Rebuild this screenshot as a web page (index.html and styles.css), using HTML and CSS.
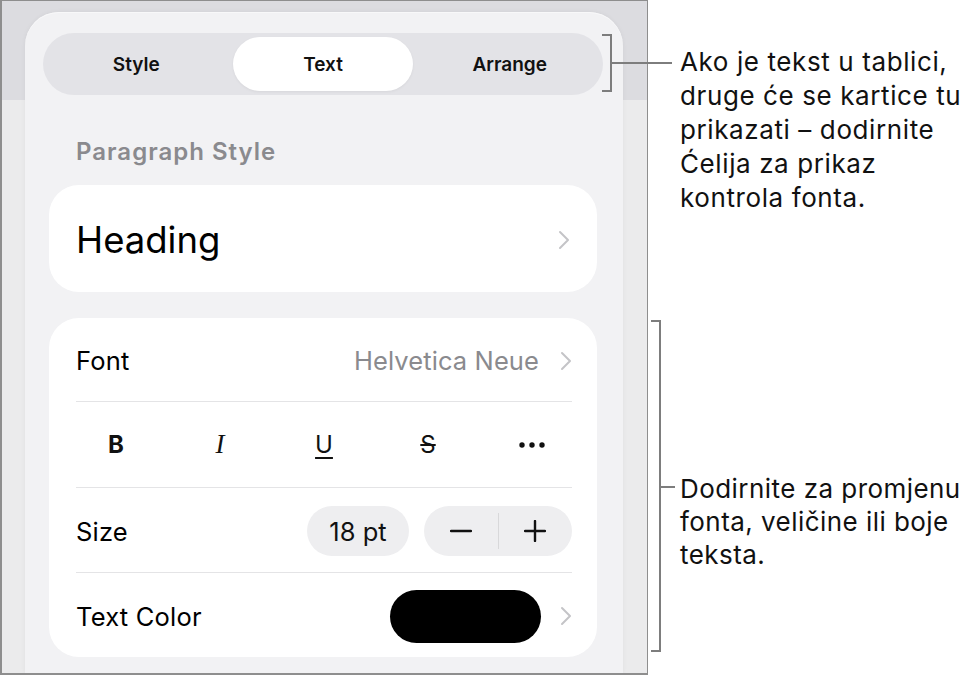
FILE: index.html
```html
<!DOCTYPE html>
<html lang="hr">
<head>
<meta charset="utf-8">
<title>Text format panel</title>
<link rel="stylesheet" href="styles.css">
</head>
<body>
<div class="stage">
  <div class="device">
    <div class="panel">
      <div class="segmented">
        <div class="seg">Style</div>
        <div class="seg seg-active">Text</div>
        <div class="seg">Arrange</div>
      </div>

      <div class="section-label">Paragraph Style</div>

      <div class="card card-heading">
        <span class="heading-value">Heading</span>
        <svg class="chev" viewBox="0 0 12 20" width="12" height="20"><path d="M2 2l8 8-8 8" fill="none" stroke="#c4c4c7" stroke-width="2" stroke-linecap="round" stroke-linejoin="round"/></svg>
      </div>

      <div class="card card-font">
        <div class="row row-first">
          <span class="row-label">Font</span>
          <span class="row-value">Helvetica Neue</span>
          <svg class="chev chev-gap" viewBox="0 0 12 20" width="12" height="20"><path d="M2 2l8 8-8 8" fill="none" stroke="#c4c4c7" stroke-width="2" stroke-linecap="round" stroke-linejoin="round"/></svg>
        </div>
        <div class="sep"></div>
        <div class="row row-format">
          <span class="fmt fmt-b">B</span>
          <span class="fmt fmt-i">I</span>
          <span class="fmt fmt-u">U</span>
          <span class="fmt fmt-s">S</span>
          <span class="fmt fmt-more"><svg viewBox="0 0 26 6" width="26" height="6"><circle cx="3" cy="3" r="2.7" fill="#111"/><circle cx="13" cy="3" r="2.7" fill="#111"/><circle cx="23" cy="3" r="2.7" fill="#111"/></svg></span>
        </div>
        <div class="sep"></div>
        <div class="row">
          <span class="row-label">Size</span>
          <span class="size-pill">18 pt</span>
          <div class="stepper">
            <span class="step"><svg viewBox="0 0 22 22" width="22" height="22"><path d="M1 11h20" stroke="#111" stroke-width="2.4" stroke-linecap="round"/></svg></span>
            <span class="step-div"></span>
            <span class="step"><svg viewBox="0 0 22 22" width="22" height="22"><path d="M1 11h20M11 1v20" stroke="#111" stroke-width="2.4" stroke-linecap="round"/></svg></span>
          </div>
        </div>
        <div class="sep"></div>
        <div class="row">
          <span class="row-label">Text Color</span>
          <span class="swatch"></span>
          <svg class="chev chev-swatch" viewBox="0 0 12 20" width="12" height="20"><path d="M2 2l8 8-8 8" fill="none" stroke="#c4c4c7" stroke-width="2" stroke-linecap="round" stroke-linejoin="round"/></svg>
        </div>
      </div>
    </div>
  </div>

  <div class="notes">
    <p class="note note-top">
      <span class="line">Ako je tekst u tablici,</span>
      <span class="line">druge će se kartice tu</span>
      <span class="line">prikazati – dodirnite</span>
      <span class="line">Ćelija za prikaz</span>
      <span class="line">kontrola fonta.</span>
    </p>
    <p class="note note-bottom">
      <span class="line">Dodirnite za promjenu</span>
      <span class="line">fonta, veličine ili boje</span>
      <span class="line">teksta.</span>
    </p>
  </div>

  <div class="bracket bracket-top"></div>
  <div class="leader leader-top"></div>
  <div class="bracket bracket-bottom"></div>
  <div class="leader leader-bottom"></div>
</div>
</body>
</html>
```

FILE: styles.css
```css
html, body {
  margin: 0;
  padding: 0;
  background: #ffffff;
}

body {
  font-family: Inter, "Noto Sans", "Liberation Sans", sans-serif;
  color: #111111;
}

.stage {
  position: relative;
  width: 971px;
  height: 676px;
  display: flex;
  overflow: hidden;
}

/* ---------- device screenshot ---------- */
.device {
  flex: none;
  width: 648px;
  height: 675px;
  box-sizing: border-box;
  border: 1px solid #8e8e8e;
  border-left-width: 2px;
  border-bottom-width: 2px;
  background: linear-gradient(to bottom, #dcdce0 0, #dcdce0 99px, #ebebec 99px, #ebebec 100%);
  display: flex;
  overflow: hidden;
}

.panel {
  flex: none;
  width: 598px;
  margin: 11px 24px 0 23px;
  box-sizing: border-box;
  padding: 21px 20px 0 18px;
  background: #f2f2f4;
  border-radius: 34px 34px 0 0;
  box-shadow: 0 0 5px rgba(0, 0, 0, 0.05), inset 0 1px 0 #f8f8f9;
}

/* segmented control */
.segmented {
  display: grid;
  grid-template-columns: repeat(3, 1fr);
  height: 62px;
  box-sizing: border-box;
  padding: 4px 0;
  background: #e3e3e7;
  border-radius: 31px;
}

.seg {
  display: flex;
  align-items: center;
  justify-content: center;
  font-size: 19px;
  font-weight: 600;
  color: #111111;
  border-radius: 27px;
}

.seg-active {
  background: #ffffff;
  margin: 0 3px;
  box-shadow: 0 1px 3px rgba(0, 0, 0, 0.05);
}

/* section label */
.section-label {
  margin: 43px 0 0 33px;
  font-size: 24px;
  line-height: 28px;
  font-weight: 600;
  letter-spacing: 1px;
  color: #8a8a8e;
}

/* cards */
.card {
  margin-left: 6px;
  width: 548px;
  background: #ffffff;
  border-radius: 30px;
  box-sizing: border-box;
}

.card-heading {
  margin-top: 19px;
  height: 107px;
  padding: 3px 27px 0 27px;
  display: flex;
  align-items: center;
  justify-content: space-between;
}

.heading-value {
  font-size: 36.5px;
  font-weight: 400;
  color: #000000;
}

.card-font {
  margin-top: 26px;
  padding: 0 25px 0 27px;
}

.chev {
  flex: none;
  display: block;
}

.row {
  display: flex;
  align-items: center;
  height: 84px;
  padding-top: 2px;
  box-sizing: border-box;
}

.row-first {
  height: 83px;
}

.row-label {
  font-size: 25.5px;
  letter-spacing: 0.2px;
  color: #000000;
}

.row-value {
  margin-left: auto;
  font-size: 25.5px;
  letter-spacing: 0.1px;
  color: #8a8a8e;
}

.chev-gap {
  margin-left: 21px;
}

.sep {
  height: 1px;
  background: #e4e4e6;
}

/* format buttons */
.row-format {
  height: 85px;
  display: grid;
  grid-template-columns: repeat(5, 104px);
  margin: 0 -12px;
  padding-top: 0;
}

.fmt {
  display: flex;
  align-items: center;
  justify-content: center;
  font-size: 24px;
  color: #111111;
}

.fmt-b {
  font-weight: 700;
}

.fmt-i {
  font-family: "Liberation Serif", "DejaVu Serif", serif;
  font-style: italic;
  font-size: 27px;
}

.fmt-u {
  text-decoration: underline;
  text-decoration-thickness: 2px;
  text-underline-offset: 4px;
}

.fmt-s {
  text-decoration: line-through;
  text-decoration-thickness: 2px;
}

.fmt-more svg {
  display: block;
}

/* size controls */
.size-pill {
  margin-left: auto;
  width: 102px;
  height: 50px;
  border-radius: 25px;
  background: #eeeef0;
  display: flex;
  align-items: center;
  justify-content: center;
  font-size: 25.5px;
  color: #111111;
}

.stepper {
  margin-left: 15px;
  width: 148px;
  height: 50px;
  border-radius: 25px;
  background: #eeeef0;
  display: grid;
  grid-template-columns: 1fr 1px 1fr;
  align-items: center;
}

.step {
  display: flex;
  align-items: center;
  justify-content: center;
}

.step svg {
  display: block;
}

.step-div {
  height: 36px;
  background: #d8d8da;
}

/* text colour */
.swatch {
  margin-left: auto;
  width: 151px;
  height: 53px;
  border-radius: 27px;
  background: #000000;
}

.chev-swatch {
  margin-left: 19px;
}

/* ---------- annotations ---------- */
.notes {
  flex: 1;
  padding: 45px 0 0 32px;
}

.note {
  margin: 0;
  font-size: 26px;
  color: #111111;
}

.note .line {
  display: block;
  white-space: nowrap;
}

.note-top {
  line-height: 34px;
  letter-spacing: 0.6px;
}

.note-bottom {
  margin-top: 257px;
  line-height: 33px;
  letter-spacing: 0.45px;
}

.bracket {
  position: absolute;
  box-sizing: content-box;
  border: 2px solid #7d7d7d;
  border-left: none;
  width: 8px;
}

.bracket-top {
  left: 602px;
  top: 34px;
  height: 54px;
}

.bracket-bottom {
  left: 651px;
  top: 320px;
  height: 328px;
}

.leader {
  position: absolute;
  height: 2px;
  background: #7d7d7d;
}

.leader-top {
  left: 612px;
  top: 62px;
  width: 60px;
}

.leader-bottom {
  left: 661px;
  top: 486px;
  width: 14px;
}
```
